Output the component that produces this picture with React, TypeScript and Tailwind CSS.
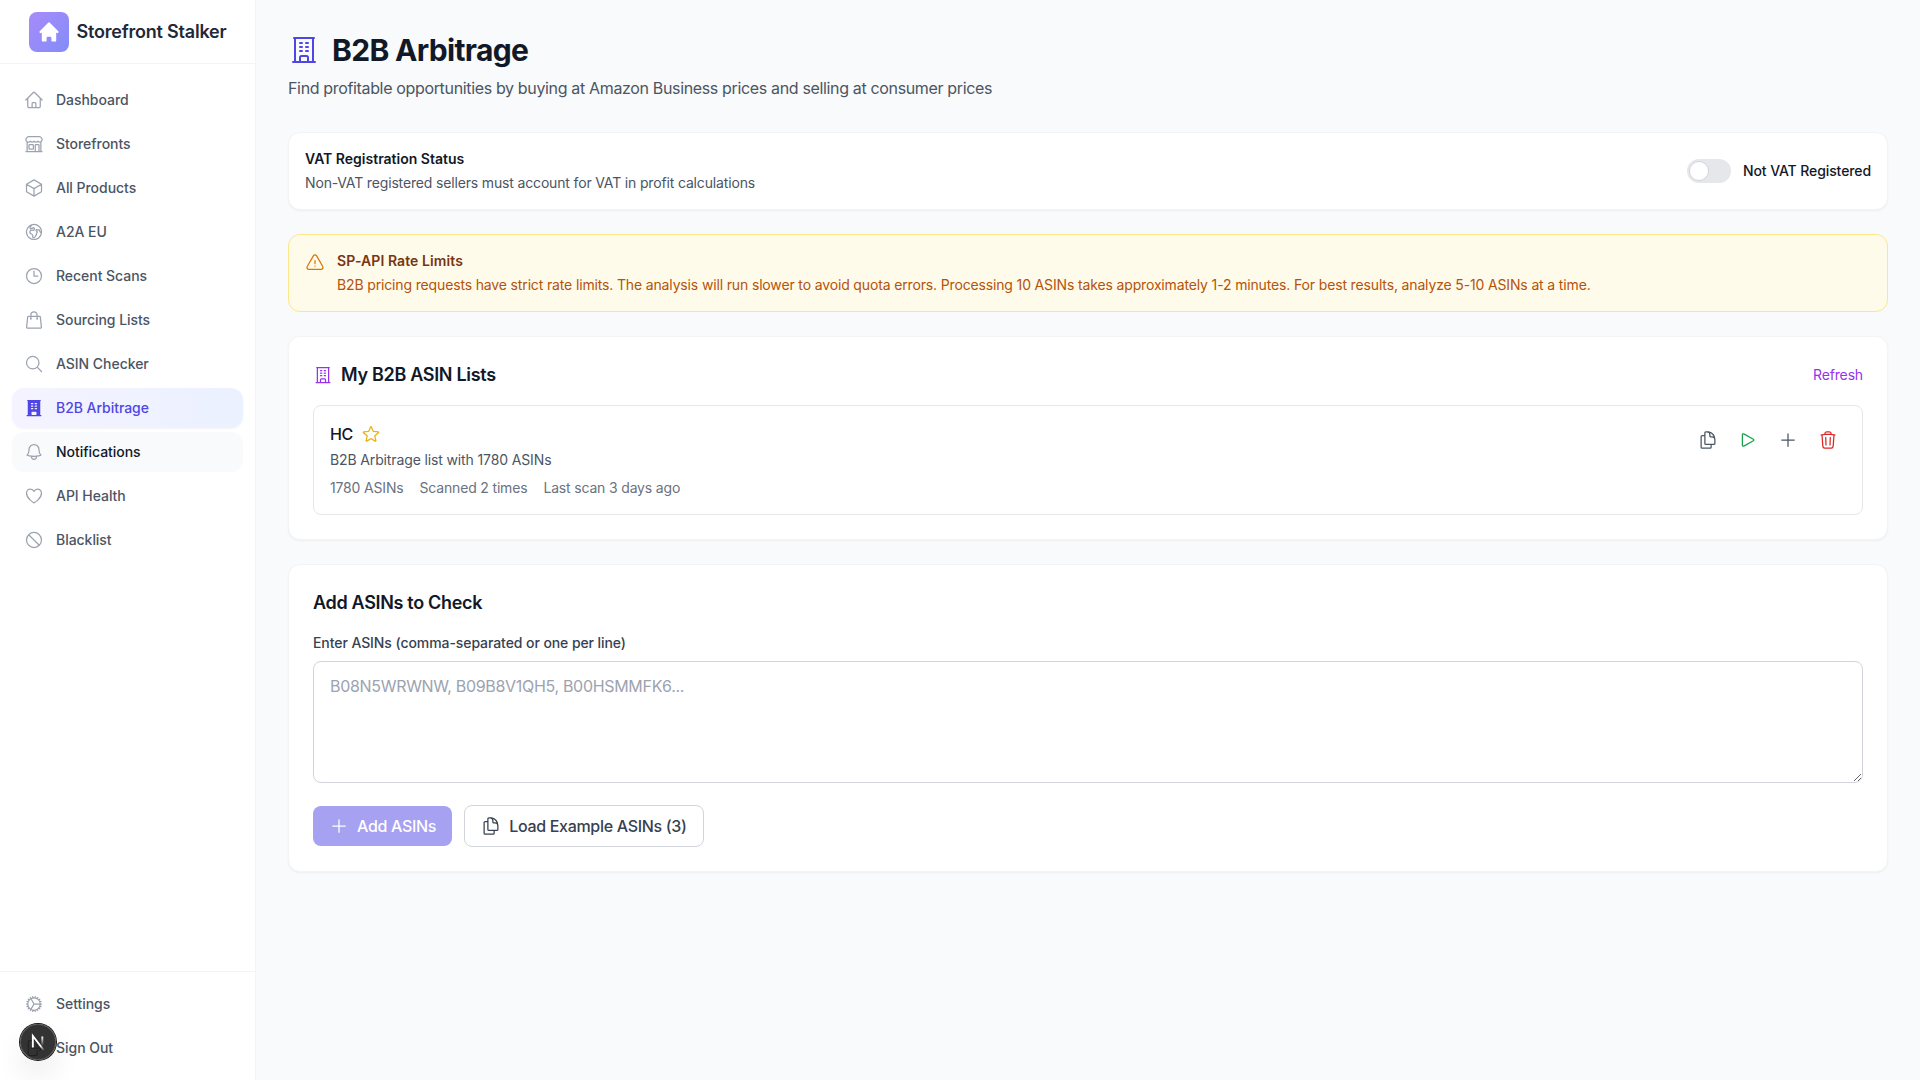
import React from 'react';
import { HiHome } from 'react-icons/hi';
import {
  HiOutlineArrowRightOnRectangle,
  HiOutlineBell,
  HiOutlineBuildingOffice,
  HiBuildingOffice,
  HiOutlineBuildingStorefront,
  HiOutlineClock,
  HiOutlineCog,
  HiOutlineCube,
  HiOutlineDocumentDuplicate,
  HiOutlineExclamationTriangle,
  HiOutlineGlobeEuropeAfrica,
  HiOutlineHeart,
  HiOutlineHome,
  HiOutlineMagnifyingGlass,
  HiOutlineNoSymbol,
  HiOutlinePlay,
  HiOutlinePlus,
  HiOutlineShoppingBag,
  HiOutlineStar,
  HiOutlineTrash,
} from 'react-icons/hi2';
import type { IconType } from 'react-icons';

type State = 'active' | 'hover' | 'idle';

interface Item {
  label: string;
  icon: IconType;
  state?: State;
}

const mainItems: Item[] = [
  { label: 'Dashboard', icon: HiOutlineHome },
  { label: 'Storefronts', icon: HiOutlineBuildingStorefront },
  { label: 'All Products', icon: HiOutlineCube },
  { label: 'A2A EU', icon: HiOutlineGlobeEuropeAfrica },
  { label: 'Recent Scans', icon: HiOutlineClock },
  { label: 'Sourcing Lists', icon: HiOutlineShoppingBag },
  { label: 'ASIN Checker', icon: HiOutlineMagnifyingGlass },
  { label: 'B2B Arbitrage', icon: HiBuildingOffice, state: 'active' },
  { label: 'Notifications', icon: HiOutlineBell, state: 'hover' },
  { label: 'API Health', icon: HiOutlineHeart },
  { label: 'Blacklist', icon: HiOutlineNoSymbol },
];

const footerItems: Item[] = [
  { label: 'Settings', icon: HiOutlineCog },
  { label: 'Sign Out', icon: HiOutlineArrowRightOnRectangle },
];

const rowStyles: Record<State, string> = {
  active: 'bg-linear-to-r from-[#f5f3ff] to-[#ebf1ff] text-[#4f46e5] shadow-xs',
  hover: 'bg-[#f9fafb] text-[#111827]',
  idle: 'text-[#4b5563]',
};

function NavItem({ label, icon: Icon, state = 'idle' }: Item) {
  return (
    <a
      className={`flex h-10 items-center gap-3 rounded-xl px-3 text-sm font-medium tracking-[-0.04px] ${rowStyles[state]}`}
    >
      <Icon className={`size-5 shrink-0 ${state === 'active' ? 'text-[#4f46e5]' : 'text-[#9ca3af]'}`} />
      {label}
    </a>
  );
}

function Sidebar() {
  return (
    <aside className="flex w-64 shrink-0 flex-col border-r border-[#f3f4f6] bg-white">
      <div className="flex h-16 items-center justify-center gap-2 border-b border-[#f3f4f6]">
        <div className="flex size-10 items-center justify-center rounded-lg bg-linear-to-br from-[#a78bfa] to-[#818cf8]">
          <HiHome className="size-6 text-white" />
        </div>
        <span className="text-lg font-semibold tracking-[-0.21px] text-[#1f2937]">Storefront Stalker</span>
      </div>
      <nav className="flex flex-1 flex-col gap-1 px-3 py-4">
        {mainItems.map((item) => (
          <NavItem key={item.label} {...item} />
        ))}
      </nav>
      <div className="flex flex-col gap-1 border-t border-[#f3f4f6] p-3">
        {footerItems.map((item) => (
          <NavItem key={item.label} {...item} />
        ))}
      </div>
    </aside>
  );
}

function DevBadge() {
  return (
    <div className="fixed bottom-5 left-5 size-9 rounded-full bg-black/80 shadow-[0_0_0_1px_#171717,inset_0_0_0_1px_rgba(255,255,255,0.14),0_16px_32px_-8px_rgba(0,0,0,0.24)]">
      <svg width="36" height="36" viewBox="0 0 36 36" fill="none">
        <defs>
          <linearGradient id="diag" x1="9.955" y1="11.13" x2="13.4" y2="15.6" gradientUnits="userSpaceOnUse">
            <stop stopColor="white" />
            <stop offset="1" stopColor="white" stopOpacity="0" />
          </linearGradient>
          <linearGradient id="stem" x1="11.8" y1="1.5" x2="11.8" y2="11" gradientUnits="userSpaceOnUse">
            <stop stopColor="white" />
            <stop offset="1" stopColor="white" stopOpacity="0" />
          </linearGradient>
        </defs>
        <g transform="translate(10.5 11)" strokeWidth="1.86">
          <path d="M13.3 15.2 L2.34 1 V12.6" stroke="url(#diag)" />
          <path d="M11.825 1.5 V13.1" stroke="url(#stem)" />
        </g>
      </svg>
    </div>
  );
}

const cardClass = 'rounded-xl border border-[#f3f4f6] bg-white shadow-xs';

const rowActions: { icon: IconType; color: string; name: string }[] = [
  { icon: HiOutlineDocumentDuplicate, color: 'text-[#4b5563]', name: 'Copy' },
  { icon: HiOutlinePlay, color: 'text-[#16a34a]', name: 'Run' },
  { icon: HiOutlinePlus, color: 'text-[#4b5563]', name: 'Add' },
  { icon: HiOutlineTrash, color: 'text-[#dc2626]', name: 'Delete' },
];

export default function App() {
  return (
    <div className="flex h-screen bg-[#f9fafb] font-['Inter',sans-serif] text-[#111827]">
      <Sidebar />
      <main className="flex flex-1 flex-col gap-6 p-8">
        <header className="mb-2">
          <h1 className="flex items-center gap-3 text-3xl font-bold tracking-[-0.67px]">
            <HiOutlineBuildingOffice className="size-8 text-[#4f46e5]" />
            B2B Arbitrage
          </h1>
          <p className="mt-2 tracking-[-0.345px] text-[#4b5563]">
            Find profitable opportunities by buying at Amazon Business prices and selling at consumer prices
          </p>
        </header>

        <section className={`flex items-center justify-between p-4 ${cardClass}`}>
          <div className="text-sm">
            <h3 className="font-semibold">VAT Registration Status</h3>
            <p className="mt-1 tracking-[-0.157px] text-[#4b5563]">
              Non-VAT registered sellers must account for VAT in profit calculations
            </p>
          </div>
          <div className="flex items-center gap-3">
            <div className="h-6 w-11 rounded-full bg-[#e5e7eb] p-0.5">
              <div className="size-5 rounded-full border border-[#d1d5db] bg-white" />
            </div>
            <span className="text-sm font-medium tracking-[-0.1px]">Not VAT Registered</span>
          </div>
        </section>

        <section className="flex items-start gap-3 rounded-xl border border-[#fde68a] bg-[#fffbeb] p-4 text-sm">
          <HiOutlineExclamationTriangle className="mt-0.5 size-5 text-[#d97706]" />
          <div>
            <h3 className="font-semibold tracking-[0.08px] text-[#78350f]">SP-API Rate Limits</h3>
            <p className="mt-1 tracking-[-0.147px] text-[#b45309]">
              B2B pricing requests have strict rate limits. The analysis will run slower to avoid quota errors.
              Processing 10 ASINs takes approximately 1-2 minutes. For best results, analyze 5-10 ASINs at a time.
            </p>
          </div>
        </section>

        <section className={`p-6 ${cardClass}`}>
          <div className="mb-4 flex items-center justify-between">
            <h2 className="flex items-center gap-2 text-lg font-semibold tracking-[-0.31px]">
              <HiOutlineBuildingOffice className="size-5 text-[#9333ea]" />
              My B2B ASIN Lists
            </h2>
            <button className="text-sm tracking-[-0.15px] text-[#9333ea]">Refresh</button>
          </div>
          <div className="flex items-start justify-between rounded-lg border border-[#e5e7eb] p-4">
            <div>
              <h3 className="flex items-center gap-2 font-medium tracking-[-0.4px]">
                HC
                <HiOutlineStar className="size-5 text-[#eab308]" />
              </h3>
              <p className="mt-1 text-sm tracking-[-0.13px] text-[#4b5563]">B2B Arbitrage list with 1780 ASINs</p>
              <div className="mt-2 flex gap-4 text-sm tracking-[-0.17px] text-[#6b7280]">
                <span>1780 ASINs</span>
                <span>Scanned 2 times</span>
                <span>Last scan 3 days ago</span>
              </div>
            </div>
            <div className="flex gap-1">
              {rowActions.map(({ icon: Icon, color, name }) => (
                <button key={name} aria-label={name} className={`p-2 ${color}`}>
                  <Icon className="size-5" />
                </button>
              ))}
            </div>
          </div>
        </section>

        <section className={`p-6 ${cardClass}`}>
          <h2 className="mb-4 text-lg font-semibold tracking-[-0.32px]">Add ASINs to Check</h2>
          <label className="mb-2 block text-sm font-medium tracking-[-0.08px] text-[#374151]">
            Enter ASINs (comma-separated or one per line)
          </label>
          <textarea
            rows={4}
            placeholder="B08N5WRWNW, B09B8V1QH5, B00HSMMFK6..."
            className="block w-full rounded-lg border border-[#d1d5db] px-4 py-3 tracking-[-0.31px] placeholder:text-[#9ca3af]"
          />
          <div className="mt-[22px] flex items-center gap-3 tracking-[-0.31px]">
            <button className="flex items-center gap-2 rounded-lg bg-[#4f46e5] px-4 py-2 font-medium text-white opacity-50">
              <HiOutlinePlus className="size-5" />
              Add ASINs
            </button>
            <button className="flex items-center gap-2 rounded-lg border border-[#d1d5db] bg-white px-4 py-2 font-medium text-[#374151]">
              <HiOutlineDocumentDuplicate className="size-5" />
              Load Example ASINs (3)
            </button>
          </div>
        </section>
      </main>
      <DevBadge />
    </div>
  );
}
